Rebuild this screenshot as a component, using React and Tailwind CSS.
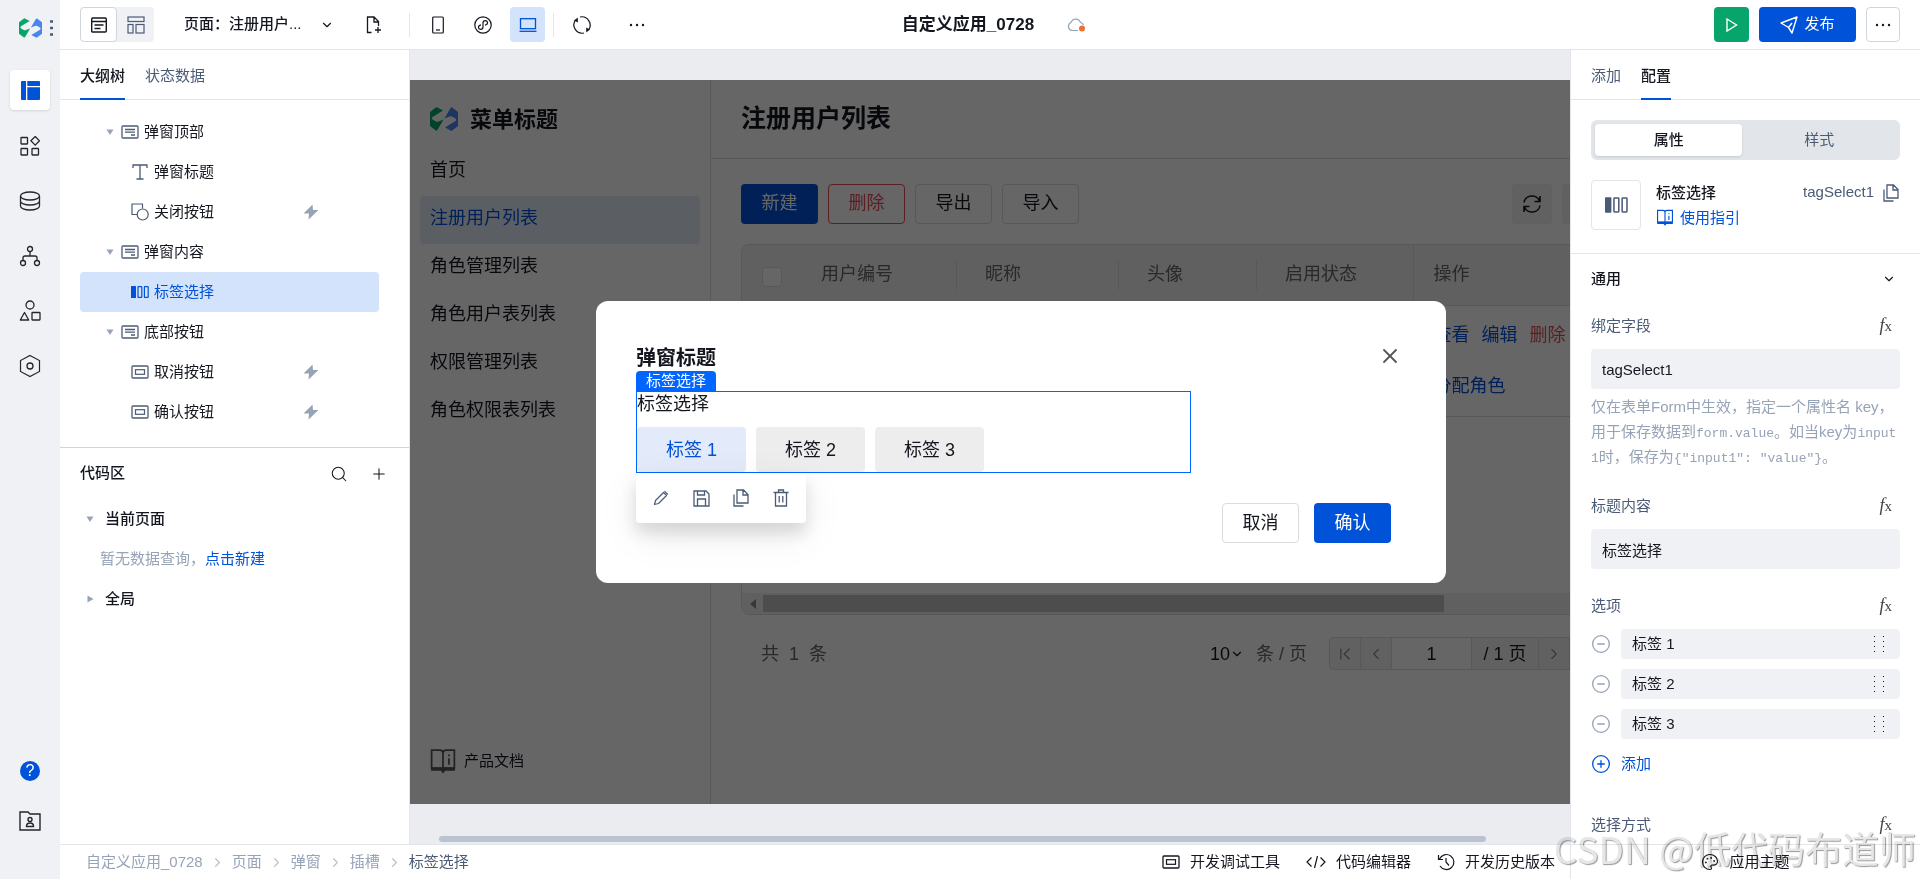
import React, { useState } from 'react'
import { ChevronDown, ChevronRight, ChevronLeft, ChevronFirst, ChevronLast, Search, Plus, X, Palette, CirclePlus, CircleMinus } from 'lucide-react'

function Svg({ w = 20, h = 20, box, className = "", children }) {
    return (
        <svg width={w} height={h} viewBox={box || `0 0 ${w} ${h}`} fill="none" stroke="currentColor" className={"shrink-0 " + className} aria-hidden="true">
            {children}
        </svg>
    )
}

function Logo({ w = 28, h = 24 }) {
    return (
        <Svg w={w} h={h} box="0 0 28 24">
            <path d="M0 5L6.500 0L13 3.500L2.500 10Q0.800 11.500 2.500 12.500L6 14.500Q7 15 8.500 14.500L13.500 12.500L8 22L6.500 24L0 19Z" fill="#07a56b" stroke="none" />
            <path d="M28 19L21.500 24L15 20.500L25.500 14Q27.200 12.500 25.500 11.500L22 9.500Q21 9 19.500 9.500L14.500 11.500L20 2L21.500 0L28 5Z" fill="#4a84ef" stroke="none" />
        </Svg>
    )
}

function BoxIcon() {
    return (
        <Svg w={18} h={14}>
            <rect x="1" y="1" width="16" height="12" rx="1" strokeWidth="1.300" />
            <path d="M4 4.500h10M4 7.200h10M10 10h4" strokeWidth="1.300" />
        </Svg>
    )
}

function ButtonIcon({ className }) {
    return (
        <Svg w={18} h={14} className={className}>
            <rect x="1" y="1" width="16" height="12" rx="1" strokeWidth="1.300" />
            <rect x="4.500" y="4.700" width="9" height="4.600" strokeWidth="1.200" />
        </Svg>
    )
}

function TextIcon() {
    return (
        <Svg w={18} h={18}>
            <path d="M2 5V2h14v3M9 2v14M5.500 16h7" strokeWidth="1.300" />
        </Svg>
    )
}

function ShapesIcon() {
    return (
        <Svg w={18} h={18}>
            <path d="M6.500 11.500H1V1h10.500v4.500" strokeWidth="1.200" />
            <circle cx="11.700" cy="11.500" r="5.500" strokeWidth="1.200" />
        </Svg>
    )
}

function TagIcon({ w = 18, h = 14 }) {
    return (
        <Svg w={w} h={h} box="0 0 18 14">
            <rect x="0" y="1" width="5" height="12" rx="0.500" fill="currentColor" stroke="none" />
            <rect x="7" y="1.600" width="3.800" height="10.800" rx="0.500" strokeWidth="1.200" />
            <rect x="13.400" y="1.600" width="3.800" height="10.800" rx="0.500" strokeWidth="1.200" />
        </Svg>
    )
}

function BoltIcon() {
    return (
        <Svg w={16} h={16} className="text-[#97a3b7]">
            <path d="M9.500 0.500L0.500 9.500H6L5.500 15.500L15.500 6H10Z" fill="currentColor" stroke="none" />
        </Svg>
    )
}

function BookIcon({ w = 18, h = 17 }) {
    return (
        <Svg w={w} h={h} box="0 0 24 24">
            <path d="M12 4.500C12 3 10.500 2 9 2H1.500v16.500H22.500V2H15c-1.500 0-3 1-3 2.500v14M17.500 9.500v6M17.500 6v1.500" strokeWidth="1.600" />
            <path d="M1 18h22v3h-9l-2 2.500l-2-2.500H1z" fill="currentColor" stroke="none" />
        </Svg>
    )
}

function CopyIcon() {
    return (
        <Svg w={18} h={18}>
            <path d="M5 1h6.500L16 5.500V14H5zM11 1v5h5M2 5.500V17h9.500" strokeWidth="1.300" />
        </Svg>
    )
}

function Caret({ open = true }) {
    return (
        <Svg w={8} h={8} className="text-[#97a3b7]">
            <path d={open ? "M0.500 1.500h7L4 7z" : "M1.500 0.500v7L7.500 4z"} fill="currentColor" stroke="none" />
        </Svg>
    )
}

function Dots() {
    return (
        <Svg w={16} h={4}>
            <circle cx="2" cy="2" r="1.200" fill="currentColor" stroke="none" />
            <circle cx="8" cy="2" r="1.200" fill="currentColor" stroke="none" />
            <circle cx="14" cy="2" r="1.200" fill="currentColor" stroke="none" />
        </Svg>
    )
}

function PlaneIcon() {
    return (
        <Svg w={18} h={18}>
            <path d="M1 7L17 1L12 17L8.500 11.500zM8.500 11.500L12 7" strokeWidth="1.400" strokeLinejoin="round" />
        </Svg>
    )
}

const railIcons = [
    {
        name: "组件",
        icon: <Svg w={20} h={20}><rect x="1" y="1.500" width="6.500" height="6.500" rx="0.500" strokeWidth="1.300" /><rect x="1" y="12.500" width="6.500" height="6.500" rx="0.500" strokeWidth="1.300" /><rect x="12" y="12.500" width="6.500" height="6.500" rx="0.500" strokeWidth="1.300" /><path d="M15.200 0.500l4.300 4.300l-4.300 4.300l-4.300-4.300z" strokeWidth="1.300" /></Svg>
    },
    {
        name: "数据库",
        icon: <Svg w={22} h={20}><ellipse cx="11" cy="5" rx="9.500" ry="4" strokeWidth="1.300" /><path d="M1.500 5v10c0 2.200 4.200 4 9.500 4s9.500-1.800 9.500-4V5M1.500 10c0 2.200 4.200 4 9.500 4s9.500-1.800 9.500-4" strokeWidth="1.300" /></Svg>
    },
    {
        name: "流程",
        icon: <Svg w={22} h={22}><circle cx="11" cy="4" r="2.500" strokeWidth="1.300" /><circle cx="4" cy="18" r="2.500" strokeWidth="1.300" /><circle cx="18" cy="18" r="2.500" strokeWidth="1.300" /><path d="M11 6.500V11M4 15.500V13q0-2 2-2h10q2 0 2 2v2.500" strokeWidth="1.300" /></Svg>
    },
    {
        name: "素材",
        icon: <Svg w={22} h={22}><circle cx="11" cy="5" r="4" strokeWidth="1.300" /><path d="M5.500 12.500L1.300 20h8.400z" strokeWidth="1.300" strokeLinejoin="round" /><rect x="13" y="12.500" width="8" height="7.500" rx="0.500" strokeWidth="1.300" /></Svg>
    },
    {
        name: "设置",
        icon: <Svg w={22} h={24}><path d="M11 1.500l9.500 5v11l-9.500 5l-9.500-5v-11z" strokeWidth="1.200" /><circle cx="11" cy="12" r="3" strokeWidth="1.300" /></Svg>
    },
]

const tree = [
    { name: "弹窗顶部", icon: <BoxIcon />, parent: true },
    { name: "弹窗标题", icon: <TextIcon /> },
    { name: "关闭按钮", icon: <ShapesIcon />, event: true },
    { name: "弹窗内容", icon: <BoxIcon />, parent: true },
    { name: "标签选择", icon: <TagIcon /> },
    { name: "底部按钮", icon: <BoxIcon />, parent: true },
    { name: "取消按钮", icon: <ButtonIcon />, event: true },
    { name: "确认按钮", icon: <ButtonIcon />, event: true },
]

const menus = ["首页", "注册用户列表", "角色管理列表", "角色用户表列表", "权限管理列表", "角色权限表列表"]
const columns = ["用户编号", "昵称", "头像", "启用状态"]
const crumbs = ["自定义应用_0728", "页面", "弹窗", "插槽"]
const tags = ["标签 1", "标签 2", "标签 3"]

function Rail() {
    return (
        <nav className="flex w-[60px] shrink-0 flex-col items-center bg-[#f0f1f5] pb-12">
            <div className="flex h-[56px] w-full items-center gap-2 pl-[19px]">
                <Logo w={23} h={20} />
                <Svg w={3} h={16} className="text-[#4b5b76]">
                    <path d="M0 1.500h3M0 8h3M0 14.500h3" strokeWidth="2.500" />
                </Svg>
            </div>
            <button aria-label="页面" className="mt-3.5 flex h-10 w-10 items-center justify-center rounded bg-white text-[#0052d9] shadow">
                <Svg w={19} h={19}>
                    <path d="M1 0h4v19H1q-1 0-1-1V1q0-1 1-1zM6.300 0H18q1 0 1 1v4H6.300zM6.300 6.300H19V18q0 1-1 1H6.300z" fill="currentColor" stroke="none" />
                </Svg>
            </button>
            <div className="mt-2 flex flex-col">
                {railIcons.map((item) => (
                    <button key={item.name} aria-label={item.name} className="flex h-[55px] w-10 items-center justify-center text-[#23262e]">{item.icon}</button>
                ))}
            </div>
            <button aria-label="帮助" className="mt-auto flex h-5 w-5 items-center justify-center rounded-full bg-[#0052d9] text-base leading-5 text-white">?</button>
            <button aria-label="资源" className="mt-[30px] flex h-5 items-center justify-center text-[#23262e]">
                <Svg w={22} h={20}>
                    <path d="M1 1h8l2 2h10v16H1z" strokeWidth="1.400" />
                    <circle cx="11" cy="8.500" r="2" strokeWidth="1.400" />
                    <path d="M7.500 15.500q0-3.500 3.500-3.500t3.500 3.500z" strokeWidth="1.400" />
                </Svg>
            </button>
        </nav>
    )
}

function Header() {
    return (
        <header className="flex h-[50px] shrink-0 items-center border-b border-[#e2e5ea] px-5">
            <div className="flex flex-1 items-center">
                <div className="flex h-[35px] rounded bg-[#f0f1f5]">
                    <button aria-label="表单视图" className="flex w-[37px] items-center justify-center rounded border border-[#cfd5df] bg-white">
                        <Svg w={16} h={16}><rect x="0.700" y="1" width="14.600" height="14" rx="1" strokeWidth="1.400" /><path d="M1 4.500h14M3.500 8h9M3.500 11.500h6" strokeWidth="1.400" /></Svg>
                    </button>
                    <button aria-label="布局视图" className="flex w-[37px] items-center justify-center text-[#4b5b76]">
                        <Svg w={18} h={18}><rect x="1" y="1" width="16" height="4.500" strokeWidth="1.200" /><rect x="1" y="8.500" width="5" height="8.500" strokeWidth="1.200" /><rect x="9" y="8.500" width="8" height="8.500" strokeWidth="1.200" /></Svg>
                    </button>
                </div>
                <button className="ml-[30px] flex items-center text-[15px] font-medium">
                    <span className="w-[136px] text-left">页面：注册用户...</span>
                    <ChevronDown size={14} strokeWidth={2} />
                </button>
                <button aria-label="新建页面" className="ml-[31px] mr-[26px]">
                    <Svg w={18} h={20}><path d="M6.500 17.500H2.500V2H9l4.500 4.500V11M9 2v5h4.500M10 15h6M13 12v6" strokeWidth="1.300" /></Svg>
                </button>
                <div className="h-6 w-px bg-[#e2e5ea]"></div>
                <div className="ml-2.5 flex h-[35px] items-center gap-2.5">
                    <button aria-label="手机" className="flex h-full w-[35px] items-center justify-center">
                        <Svg w={12} h={18}><rect x="0.700" y="1" width="10.600" height="16" rx="1" strokeWidth="1.200" /><path d="M4 14h4" strokeWidth="1.200" /></Svg>
                    </button>
                    <button aria-label="小程序" className="flex h-full w-[35px] items-center justify-center">
                        <Svg w={18} h={18}><circle cx="9" cy="9" r="8.200" strokeWidth="1.200" /><path d="M11 9.200c1.500-.3 2.500-1.200 2.500-2.400 0-1.300-1-2.100-2.200-2.100S9 5.500 9 7v4c0 1.500-1 2.300-2.300 2.300s-2.200-.8-2.200-2.100c0-1.200 1-2.100 2.500-2.400" strokeWidth="1.200" /></Svg>
                    </button>
                    <button aria-label="电脑" className="flex h-full w-[35px] items-center justify-center rounded bg-[#d4e3fc] text-[#0052d9]">
                        <Svg w={18} h={14}><rect x="1.500" y="0.700" width="15" height="10" strokeWidth="1.300" /><path d="M0.500 13.300h17" strokeWidth="1.300" /></Svg>
                    </button>
                </div>
                <div className="ml-2 h-6 w-px bg-[#e2e5ea]"></div>
                <button aria-label="刷新" className="ml-[18px]">
                    <Svg w={20} h={20}>
                        <path d="M3.500 5A8.300 8.300 0 0 0 12 18M8 2A8.300 8.300 0 0 1 16.500 15" strokeWidth="1.200" />
                        <path d="M5.800 2.500v5L2 5.500zM14.200 17.500v-5L18 14.500z" fill="currentColor" stroke="none" />
                    </Svg>
                </button>
                <button aria-label="更多" className="ml-[37px]"><Dots /></button>
            </div>

            <div className="flex items-center gap-8 pl-2.5">
                <h1 className="text-[17px] font-bold">自定义应用_0728</h1>
                <Svg w={22} h={18} className="text-[#97a3b7]">
                    <path d="M12 14.500H6A4.200 4.200 0 0 1 5 6.500a5 5 0 0 1 9.500 0a4 4 0 0 1 3 2.500" strokeWidth="1.200" />
                    <circle cx="16" cy="12.500" r="3" fill="#ee6f33" stroke="none" />
                </Svg>
            </div>

            <div className="flex h-[35px] flex-1 justify-end gap-2.5">
                <button aria-label="预览" className="flex w-[35px] items-center justify-center rounded bg-[#07a56b] text-white">
                    <Svg w={12} h={14}><path d="M1 1l9.500 6L1 13z" strokeWidth="1.400" /></Svg>
                </button>
                <button className="flex w-[97px] items-center justify-center gap-1.5 rounded bg-[#0052d9] text-[15px] text-white">
                    <PlaneIcon />发布
                </button>
                <button aria-label="更多操作" className="flex w-[34px] items-center justify-center rounded border border-[#cfd5df]"><Dots /></button>
            </div>
        </header>
    )
}

function Outline() {
    const [selected, setSelected] = useState("标签选择")

    return (
        <aside className="flex w-[350px] shrink-0 flex-col border-r border-[#e2e5ea]">
            <div className="flex h-[50px] shrink-0 gap-5 border-b border-[#e2e5ea] px-5 text-[15px]">
                <button className="-mb-px border-b-2 border-[#0052d9] pt-1 font-medium">大纲树</button>
                <button className="-mb-px border-b-2 border-transparent pt-1 text-[#4b5b76]">状态数据</button>
            </div>
            <div className="shrink-0 border-b border-[#cfd5df] pb-[15px] pl-5 pr-[30px] pt-3">
                {tree.map((item) => (
                    <button
                        key={item.name}
                        onClick={() => setSelected(item.name)}
                        className={
                            "flex h-10 w-full items-center rounded pr-[60px] text-[15px] " +
                            (item.parent ? "pl-[26px] " : "pl-[51px] ") +
                            (selected === item.name ? "bg-[#d4e3fc] text-[#0052d9]" : "")
                        }
                    >
                        {item.parent && <span className="mr-[7px]"><Caret /></span>}
                        <span className={selected === item.name ? "" : "text-[#4b5b76]"}>{item.icon}</span>
                        <span className="ml-[5px] mr-auto">{item.name}</span>
                        {item.event && <BoltIcon />}
                    </button>
                ))}
            </div>
            <div className="flex h-[51px] items-center pl-5 pr-[21px] text-[15px]">
                <h2 className="mr-auto font-medium">代码区</h2>
                <button aria-label="搜索" className="mr-[22px]"><Search size={18} strokeWidth={1.400} /></button>
                <button aria-label="新建"><Plus size={18} strokeWidth={1.400} /></button>
            </div>
            <div className="pl-[26px] text-[15px]">
                <button className="flex h-10 items-center gap-[11px] font-medium"><Caret />当前页面</button>
                <p className="flex h-10 items-center pl-3.5 text-[#97a3b7]">
                    暂无数据查询，<a href="#new" className="text-[#0052d9]">点击新建</a>
                </p>
                <button className="flex h-10 items-center gap-[11px] font-medium"><Caret open={false} />全局</button>
            </div>
        </aside>
    )
}

function UserPage() {
    return (
        <div className="flex h-full">
            <div className="flex w-[301px] shrink-0 flex-col border-r border-[#dcdcdc] px-2.5 pb-[30px]">
                <div className="flex h-[68px] items-center gap-3 pl-2.5 pt-2.5 text-[22px] font-bold">
                    <Logo />菜单标题
                </div>
                {menus.map((item) => (
                    <a key={item} href="#menu" className={"flex h-12 items-center rounded px-2.5 pb-1 text-lg " + (item === "注册用户列表" ? "bg-[#e4edfa] text-[#0052d9]" : "")}>{item}</a>
                ))}
                <a href="#docs" className="mt-auto flex items-center gap-2 pl-2.5 text-[15px]">
                    <span className="text-[#555]"><BookIcon w={26} h={26} /></span>产品文档
                </a>
            </div>
            <div className="min-w-0 flex-1">
                <h2 className="flex h-[79px] items-center border-b border-[#dcdcdc] px-[30px] text-[25px] font-bold">注册用户列表</h2>
                <div className="px-[30px] pt-[25px]">
                    <div className="flex h-10 gap-2.5 text-lg">
                        <button className="w-[77px] rounded bg-[#0052d9] pb-0.5 text-white">新建</button>
                        <button className="w-[77px] rounded border border-[#e34d59] pb-0.5 text-[#e34d59]">删除</button>
                        <button className="w-[77px] rounded border border-[#dcdcdc] pb-0.5">导出</button>
                        <button className="w-[77px] rounded border border-[#dcdcdc] pb-0.5">导入</button>
                        <button aria-label="刷新列表" className="ml-auto flex w-10 items-center justify-center rounded bg-[#f3f3f3]">
                            <Svg w={20} h={18}><path d="M2 7.500a8 7.500 0 0 1 15.500-1.500M18 1v5.500h-5.500M18 10.500a8 7.500 0 0 1-15.500 1.500M2 17v-5.500h5.500" strokeWidth="1.600" /></Svg>
                        </button>
                        <button aria-label="列设置" className="w-10 rounded bg-[#f3f3f3]"></button>
                    </div>
                    <div className="mt-5 flex min-h-[371px] flex-col overflow-hidden rounded-lg border border-[#dcdcdc]">
                        <table className="w-full table-fixed text-left text-lg">
                            <colgroup>
                                <col className="w-[51px]" />
                                <col className="w-[164px]" />
                                <col className="w-[162px]" />
                                <col className="w-[138px]" />
                                <col className="w-[156px]" />
                                <col />
                            </colgroup>
                            <thead className="bg-[#f0f0f0] text-[#666]">
                                <tr className="h-[60px] border-b border-[#dcdcdc]">
                                    <th className="pl-5 pt-1"><input type="checkbox" aria-label="全选" className="block h-5 w-5 appearance-none rounded border border-[#dcdcdc] bg-white" /></th>
                                    {columns.map((item, i) => (
                                        <th key={item} className="p-0 font-normal">
                                            <div className={"flex h-[30px] items-center border-[#dcdcdc] pb-0.5 pl-7 " + (i < 3 ? "border-r" : "")}>{item}</div>
                                        </th>
                                    ))}
                                    <th className="border-l border-[#dcdcdc] pb-0.5 pl-5 font-normal">操作</th>
                                </tr>
                            </thead>
                            <tbody>
                                <tr className="border-b border-[#dcdcdc]">
                                    <td></td><td></td><td></td><td></td><td></td>
                                    <td className="border-l border-[#dcdcdc] py-1 pl-5 text-[#0052d9]">
                                        <div className="flex h-[51px] items-center gap-3">
                                            <a href="#view">查看</a>
                                            <a href="#edit">编辑</a>
                                            <a href="#delete" className="text-[#e34d59]">删除</a>
                                        </div>
                                        <div className="flex h-[51px] items-center"><a href="#assign">分配角色</a></div>
                                    </td>
                                </tr>
                            </tbody>
                        </table>
                        <div className="mt-auto flex h-[21px] items-center bg-[#f0f0f0] pl-2 text-[#8b8b8b]">
                            <Svg w={6} h={10}><path d="M6 0v10L0 5z" fill="currentColor" stroke="none" /></Svg>
                            <div className="ml-[7px] h-[17px] w-4/5 bg-[#c1c1c1]"></div>
                        </div>
                    </div>
                    <div className="mt-[22px] flex h-[33px] items-center pl-5 text-lg">
                        <p className="mr-auto flex gap-2.5 text-[#666]"><span>共</span><span>1</span><span>条</span></p>
                        <select aria-label="每页条数" className="w-5 appearance-none">
                            <option>10</option>
                        </select>
                        <ChevronDown size={14} strokeWidth={2} />
                        <span className="ml-3 mr-[22px] text-[#666]">条 / 页</span>
                        <div className="flex h-full divide-x divide-[#dcdcdc] rounded border border-[#dcdcdc] bg-[#f3f3f3]">
                            <button aria-label="首页" className="flex w-[31px] items-center justify-center text-[#888]"><ChevronFirst size={20} strokeWidth={1.500} /></button>
                            <button aria-label="上一页" className="flex w-[31px] items-center justify-center text-[#888]"><ChevronLeft size={18} strokeWidth={1.500} /></button>
                            <input aria-label="页码" className="w-20 bg-white text-center" defaultValue="1" />
                            <span className="flex w-[67px] items-center justify-center">/ 1 页</span>
                            <button aria-label="下一页" className="flex w-[31px] items-center justify-center text-[#888]"><ChevronRight size={18} strokeWidth={1.500} /></button>
                            <button aria-label="末页" className="flex w-[31px] items-center justify-center text-[#888]"><ChevronLast size={20} strokeWidth={1.500} /></button>
                        </div>
                    </div>
                </div>
            </div>
        </div>
    )
}

function Dialog() {
    const [tag, setTag] = useState("标签 1")

    return (
        <div role="dialog" aria-label="弹窗标题" className="w-[850px] rounded-xl bg-white p-10">
            <div className="flex h-[30px] items-center justify-between pr-1">
                <h3 className="pt-1 text-xl font-bold">弹窗标题</h3>
                <button aria-label="关闭" className="text-[#555]"><X size={24} strokeWidth={1.800} /></button>
            </div>
            <div className="relative mt-5 w-[555px] border border-[#0066ff]">
                <span className="absolute -left-px -top-[21px] flex h-5 items-center rounded-t bg-[#0066ff] px-2.5 text-[15px] text-white">标签选择</span>
                <p className="mb-2.5 h-[25px] text-lg leading-[25px]">标签选择</p>
                <div className="flex gap-2.5">
                    {tags.map((item) => (
                        <button
                            key={item}
                            onClick={() => setTag(item)}
                            className={"h-[45px] rounded px-[29px] text-lg " + (tag === item ? "bg-[#e3ebfa] text-[#0052d9]" : "bg-[#ededed]")}
                        >{item}</button>
                    ))}
                </div>
                <div className="absolute -left-px top-full mt-px flex h-[50px] w-[170px] items-center rounded-b bg-white px-[5px] text-[#4b5b76] shadow-[0_10px_16px_rgba(0,0,0,0.12),0_12px_40px_rgba(0,0,0,0.08)]">
                    <button aria-label="编辑" className="flex w-10 justify-center">
                        <Svg w={16} h={16}><path d="M1.500 14.500L2.500 10.500L10.500 2.500L13.500 5.500L5.500 13.500zM11.500 1.200L14.800 4.500" strokeWidth="1.200" strokeLinejoin="round" /></Svg>
                    </button>
                    <button aria-label="保存" className="flex w-10 justify-center">
                        <Svg w={17} h={17}><path d="M1 1h12l3 3v12H1zM4.500 1v4h7V1M4.500 16V9h8v7" strokeWidth="1.300" /></Svg>
                    </button>
                    <button aria-label="复制" className="flex w-10 justify-center"><CopyIcon /></button>
                    <button aria-label="删除" className="flex w-10 justify-center">
                        <Svg w={16} h={18}><path d="M0.500 3.500h15M5.500 3.500V1h5v2.500M2.500 3.500V17h11V3.500M6.200 7v6.500M9.800 7v6.500" strokeWidth="1.300" /></Svg>
                    </button>
                </div>
            </div>
            <div className="mt-[30px] flex h-10 justify-end gap-[15px] pr-[15px] text-lg">
                <button className="w-[77px] rounded border border-[#dcdcdc]">取消</button>
                <button className="w-[77px] rounded bg-[#0052d9] text-white">确认</button>
            </div>
        </div>
    )
}

function Stage() {
    return (
        <main className="flex min-w-0 flex-1 flex-col bg-[#ebecf0] pt-[30px]">
            <div className="min-h-0 flex-1 overflow-hidden">
                <div className="relative h-full min-w-[1222px] bg-white">
                    <UserPage />
                    <div className="absolute inset-0 flex items-center justify-center bg-black/60">
                        <Dialog />
                    </div>
                </div>
            </div>
            <div className="flex h-10 items-end px-[29px] pb-0.5">
                <div className="h-1.5 w-[95%] rounded-full bg-[#bcc3d0]"></div>
            </div>
        </main>
    )
}

function Fx({ label }) {
    return (
        <button aria-label={label} className="flex items-center pb-1 pr-2 font-['Liberation_Serif','Noto_Sans_CJK_SC',serif] text-[#444]">
            <span className="text-lg italic leading-5">f</span>
            <span className="pt-0.5 text-[15px] leading-5">x</span>
        </button>
    )
}

function Code({ children }) {
    return <code className="font-['Liberation_Mono',monospace] text-[13px] leading-none">{children}</code>
}

function Config() {
    return (
        <aside className="w-[350px] shrink-0 overflow-hidden border-l border-[#e2e5ea] text-[15px]">
            <div className="flex h-[50px] gap-5 border-b border-[#e2e5ea] px-5">
                <button className="-mb-px border-b-2 border-transparent pt-1 text-[#4b5b76]">添加</button>
                <button className="-mb-px border-b-2 border-[#0052d9] pt-1 font-medium">配置</button>
            </div>
            <div className="border-b border-[#e2e5ea] px-5 pb-[23px] pt-5">
                <div className="flex h-10 rounded-md bg-[#e2e5ea] p-1">
                    <button className="w-[49%] rounded-sm bg-white font-medium shadow-sm">属性</button>
                    <button className="flex-1 text-[#4b5b76]">样式</button>
                </div>
                <div className="mt-5 flex">
                    <div className="flex h-[50px] w-[50px] items-center justify-center rounded border border-[#e2e5ea] text-[#4b5b76]"><TagIcon w={23} h={18} /></div>
                    <div className="ml-[15px] flex flex-col leading-[25px]">
                        <span className="font-medium">标签选择</span>
                        <a href="#guide" className="flex items-center gap-1.5 text-[#0052d9]"><BookIcon />使用指引</a>
                    </div>
                    <div className="ml-auto flex h-[25px] items-center gap-2 text-[#4b5b76]">
                        tagSelect1
                        <button aria-label="复制标识"><CopyIcon /></button>
                    </div>
                </div>
            </div>
            <div className="px-5">
                <button className="flex h-[50px] w-full items-center justify-between pr-1 font-medium">
                    通用<ChevronDown size={14} strokeWidth={2} />
                </button>
                <div className="flex h-[45px] items-center justify-between">
                    <label htmlFor="field" className="text-[#4b5b76]">绑定字段</label>
                    <Fx label="绑定字段表达式" />
                </div>
                <input id="field" className="h-10 w-full rounded bg-[#f0f1f5] px-[11px]" defaultValue="tagSelect1" />
                <p className="mt-[5px] break-all leading-[25px] text-[#97a3b7]">
                    仅在表单Form中生效，指定一个属性名 key，用于保存数据到<Code>form.value</Code>。如当key为<Code>input1</Code>时，保存为<Code>{'{"input1": "value"}'}</Code>。
                </p>
                <div className="mt-[15px] flex h-[45px] items-center justify-between">
                    <label htmlFor="title" className="text-[#4b5b76]">标题内容</label>
                    <Fx label="标题内容表达式" />
                </div>
                <input id="title" className="h-10 w-full rounded bg-[#f0f1f5] px-[11px]" defaultValue="标签选择" />
                <div className="mt-[15px] flex h-[45px] items-center justify-between">
                    <span className="text-[#4b5b76]">选项</span>
                    <Fx label="选项表达式" />
                </div>
                <div className="flex flex-col gap-2.5">
                    {tags.map((item) => (
                        <div key={item} className="flex h-[30px] items-center">
                            <button aria-label={"删除" + item} className="w-[30px] text-[#97a3b7]"><CircleMinus size={20} strokeWidth={1.600} /></button>
                            <div className="flex h-full flex-1 items-center rounded bg-[#f0f1f5] pl-[11px] pr-4">
                                <input aria-label={item} className="min-w-0 flex-1" defaultValue={item} />
                                <Svg w={10} h={18}>
                                    <path d="M0.500 1v16M9.500 1v16" strokeDasharray="1 4" strokeWidth="1" />
                                </Svg>
                            </div>
                        </div>
                    ))}
                </div>
                <button className="mt-2.5 flex h-[30px] items-center gap-2.5 text-[#0052d9]">
                    <CirclePlus size={20} strokeWidth={1.600} />添加
                </button>
                <div className="mt-6 flex h-[45px] items-center justify-between">
                    <span className="text-[#4b5b76]">选择方式</span>
                    <Fx label="选择方式表达式" />
                </div>
            </div>
        </aside>
    )
}

function Footer() {
    return (
        <footer className="flex h-[35px] shrink-0 border-t border-[#e2e5ea] bg-white text-[15px]">
            <div className="flex flex-1 items-center pl-[26px] pr-[15px]">
                {crumbs.map((item) => (
                    <a key={item} href="#crumb" className="flex items-center text-[#97a3b7]">
                        {item}
                        <span className="mx-[7px] text-[#bcc3d0]"><ChevronRight size={15} strokeWidth={2} /></span>
                    </a>
                ))}
                <span className="mr-auto text-[#4b5b76]">标签选择</span>
                <button className="flex items-center gap-2.5"><ButtonIcon />开发调试工具</button>
                <button className="ml-[26px] flex items-center gap-2.5">
                    <Svg w={20} h={14}><path d="M5.500 2.500L1 7l4.500 4.500M14.500 2.500L19 7l-4.500 4.500M11.500 1l-3 12" strokeWidth="1.200" /></Svg>
                    代码编辑器
                </button>
                <button className="ml-[26px] flex items-center gap-2.5">
                    <Svg w={18} h={18}><path d="M2.500 6a7.500 7.500 0 1 1 .500 7M1.500 2v4.500H6M9 5v4l3 3.500" strokeWidth="1.200" /></Svg>
                    开发历史版本
                </button>
            </div>
            <div className="flex w-[350px] items-center justify-center border-l border-[#e2e5ea]">
                <button className="flex items-center gap-2.5"><Palette size={18} strokeWidth={1.500} />应用主题</button>
            </div>
        </footer>
    )
}

export default function App() {
    return (
        <div className="relative flex h-screen overflow-hidden bg-white font-['Liberation_Sans','Noto_Sans_CJK_SC',sans-serif] text-[#14171f]">
            <Rail />
            <div className="flex min-w-0 flex-1 flex-col">
                <Header />
                <div className="flex min-h-0 flex-1">
                    <Outline />
                    <Stage />
                    <Config />
                </div>
                <Footer />
            </div>
            <div className="pointer-events-none absolute bottom-2 right-1 font-['Noto_Sans_CJK_SC',sans-serif] text-[37px] leading-[46px] text-[#e6e6e6] mix-blend-multiply [text-shadow:1px_1px_1px_rgba(110,110,110,0.7)]">CSDN @低代码布道师</div>
        </div>
    )
}
